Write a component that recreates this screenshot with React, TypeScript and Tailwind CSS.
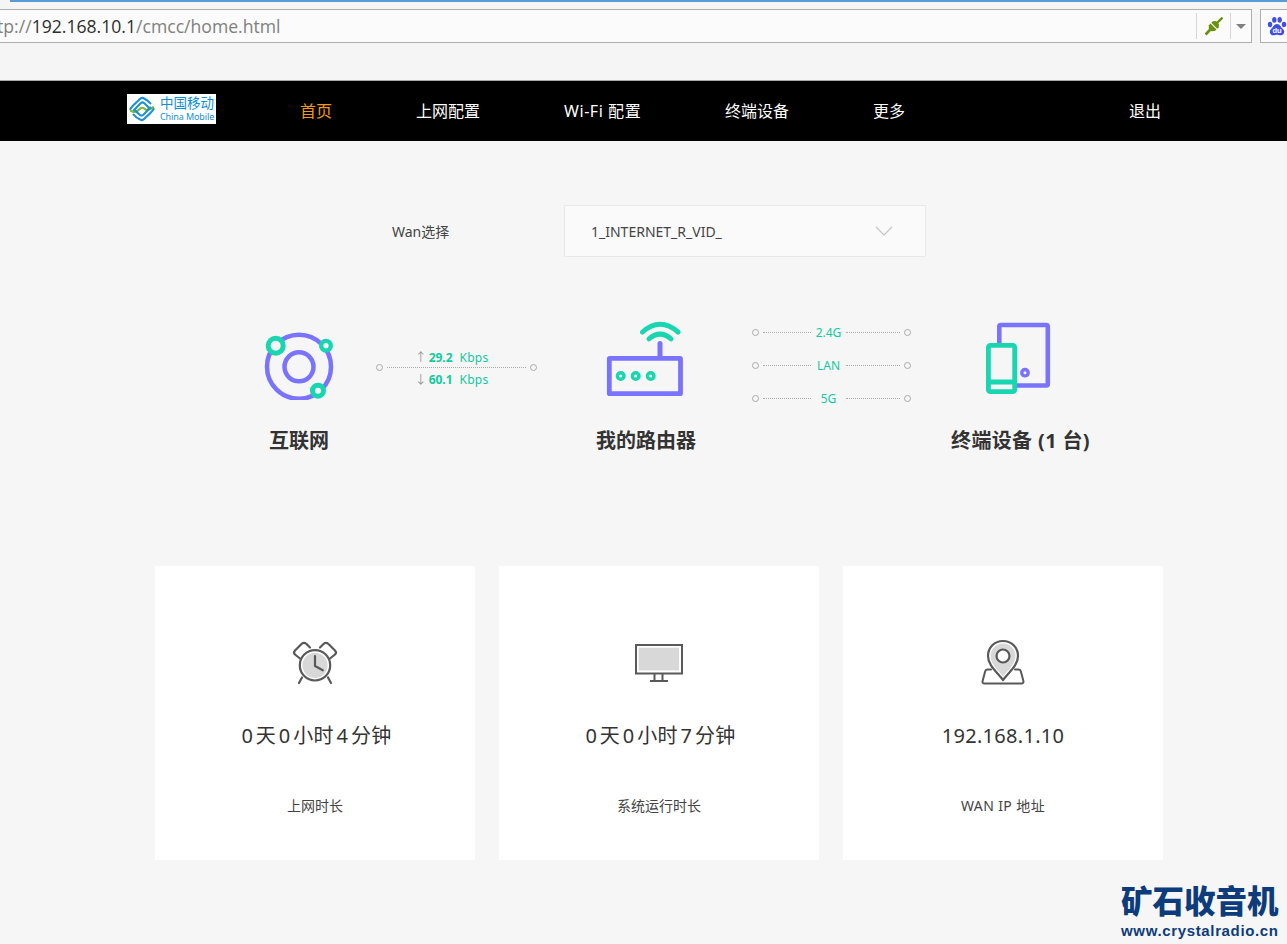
import React from "react";

const FONT = "font-['Noto_Sans','Noto_Sans_CJK_SC',sans-serif]";
const G = "#17d6b0";
const P = "#7a73ff";
const BG = "#f6f6f6";

function Plug() {
  return (
    <svg viewBox="0 0 20 20" className="w-5 h-5 block">
      <g fill="#6a900f" transform="rotate(-45 10 10)">
        <rect x="-2" y="8.6" width="7" height="2.8" rx="0.8" />
        <path d="M4.5 8 L7 5.8 H9.3 V14.2 H7 L4.5 12 Z" />
        <path d="M10.4 5.8 H12.5 L15 8 V12 L12.5 14.2 H10.4 Z" />
        <rect x="14.5" y="8.8" width="7.5" height="2.4" rx="0.8" />
      </g>
    </svg>
  );
}

function Paw() {
  return (
    <svg viewBox="0 0 20 20" className="w-5 h-5 block">
      <g fill="#3f4ee8">
        <ellipse cx="3" cy="8.5" rx="2.2" ry="2.8" />
        <ellipse cx="7.3" cy="3.8" rx="2.2" ry="2.9" />
        <ellipse cx="12.7" cy="3.8" rx="2.2" ry="2.9" />
        <ellipse cx="17" cy="8.5" rx="2.2" ry="2.8" />
        <path d="M10 8 C13 8 13.5 11 16 13 C18.5 15.5 17 19.5 13.5 19.3 C12 19.2 11 18.8 10 18.8 C9 18.8 8 19.2 6.5 19.3 C3 19.5 1.5 15.5 4 13 C6.5 11 7 8 10 8 Z" />
      </g>
      <text x="10" y="17.4" textAnchor="middle" fontSize="7.5" fontWeight="700" fill="#fff" fontFamily="Liberation Sans">du</text>
    </svg>
  );
}

function Logo() {
  return (
    <div className="w-[89px] h-[30px] -mt-[4px] bg-white flex items-center shrink-0 pl-px">
      <svg viewBox="0 0 30 30" className="w-[28px] h-[28px] block shrink-0">
        <g fill="none" strokeLinecap="round">
          <path d="M2.5 15 C5 11 9 8 12.5 4.5 Q15 2 17.5 4 Q21 5.5 24 9" stroke="#1d8fd6" strokeWidth="2.3" />
          <path d="M6 16.5 L13.5 8.8 Q15.5 7 17.5 8.8 L22 13 Q23 14.5 21.5 15.5" stroke="#1d8fd6" strokeWidth="2.3" />
          <path d="M3 17 Q8 20 12 15.5 Q15 12 18 15 Q21 18 27 13" stroke="#7dbb2e" strokeWidth="2.3" />
          <path d="M27.5 15 C25 19 21 22 17.5 25.5 Q15 28 12.5 26 Q9 24.5 6 21" stroke="#1d8fd6" strokeWidth="2.3" />
          <path d="M24 13.5 L16.5 21.2 Q14.5 23 12.5 21.2 L8 17" stroke="#1d8fd6" strokeWidth="2.3" />
        </g>
      </svg>
      <div className="ml-[4px] flex flex-col items-start text-[#0f8fd8]">
        <span className="text-[13.5px] leading-[15px]">中国移动</span>
        <span className="text-[9px] leading-[11px] tracking-[-0.1px] whitespace-nowrap">China Mobile</span>
      </div>
    </div>
  );
}

function Ring({ extra }: { extra?: string }) {
  return <span className={`w-[7px] h-[7px] rounded-full border border-[#aaaaaa] shrink-0 ${extra ?? ""}`} />;
}
function Dots({ w, extra }: { w: string; extra?: string }) {
  return <span className={`${w} border-t border-dotted border-[#aaaaaa] h-0 block shrink-0 ${extra ?? ""}`} />;
}

function Band({ label }: { label: string }) {
  return (
    <div className="h-[22px] flex items-center">
      <Ring />
      <Dots w="w-[48px]" extra="ml-[4px]" />
      <span className="w-[36px] text-center text-[12px] leading-[22px] pt-px text-[#13c9a0]">{label}</span>
      <Dots w="w-[54px]" />
      <Ring extra="ml-[4px]" />
    </div>
  );
}

function InternetIcon() {
  return (
    <svg viewBox="259 320 80 80" className="w-20 h-20 block mx-auto" fill="none">
      <circle cx="299" cy="366.8" r="32" stroke={P} strokeWidth="4.5" />
      <circle cx="299" cy="366.8" r="14.5" stroke={P} strokeWidth="4.5" />
      <circle cx="275.7" cy="345.7" r="7.5" fill={BG} stroke={G} strokeWidth="5" />
      <circle cx="326" cy="345.7" r="4.8" fill={BG} stroke={G} strokeWidth="4.4" />
      <circle cx="318" cy="390.7" r="5.5" fill={BG} stroke={G} strokeWidth="5" />
    </svg>
  );
}

function RouterIcon() {
  return (
    <svg viewBox="601 320 90 80" className="w-[90px] h-20 block mx-auto" fill="none">
      <path d="M660 343.5 V356" stroke={P} strokeWidth="5" strokeLinecap="round" />
      <path d="M642.5 332 Q660 316.5 678 332" stroke={G} strokeWidth="5" strokeLinecap="round" />
      <path d="M649 338.8 Q660 329.5 671 338.8" stroke={G} strokeWidth="5" strokeLinecap="round" />
      <rect x="609.3" y="358.3" width="71.2" height="35.4" rx="0.5" stroke={P} strokeWidth="4.8" strokeLinejoin="round" />
      {[620.7, 635.7, 650.7].map((x) => (
        <circle key={x} cx={x} cy="376" r="3.3" fill={BG} stroke={G} strokeWidth="3.4" />
      ))}
    </svg>
  );
}

function DeviceIcon() {
  return (
    <svg viewBox="982 320 77 80" className="w-[77px] h-20 block mx-auto" fill="none">
      <rect x="999.3" y="325" width="48.5" height="60.5" rx="1.5" stroke={P} strokeWidth="4.6" />
      <circle cx="1025" cy="372.7" r="3.2" fill={BG} stroke={P} strokeWidth="3.4" />
      <rect x="988.4" y="345.4" width="26.3" height="46.3" rx="2" fill={BG} stroke={G} strokeWidth="4.8" />
      <path d="M988 382 H1015" stroke={G} strokeWidth="5" />
    </svg>
  );
}

function ClockIcon() {
  return (
    <svg viewBox="0 0 70 60" className="w-[70px] h-[60px] block mx-auto" fill="none" stroke="#595959" strokeWidth="2.2" strokeLinecap="round" strokeLinejoin="round">
      <circle cx="35" cy="34.3" r="12.6" fill="#d8d8d8" stroke="none" />
      <circle cx="35" cy="34.3" r="15.2" />
      <path d="M35 25 V35 L42.8 39.3" />
      <path d="M20 27.5 L15 23.5 Q13 21.5 15 19.5 L21.5 13 Q24 10.8 26.5 13 L30 16.5" />
      <path d="M50 27.5 L55 23.5 Q57 21.5 55 19.5 L48.5 13 Q46 10.8 43.5 13 L40 16.5" />
      <path d="M22 46.5 L19 52" />
      <path d="M48 46.5 L51 52" />
    </svg>
  );
}

function MonitorIcon() {
  return (
    <svg viewBox="-1 0 70 60" className="w-[70px] h-[60px] block mx-auto" fill="none" stroke="#595959" strokeWidth="2">
      <rect x="13.7" y="16.7" width="40.3" height="22.7" fill="#d8d8d8" stroke="none" />
      <rect x="11" y="14" width="46" height="28.5" strokeWidth="2" />
      <path d="M29.5 43 V49.5 M37.5 43 V49.5 M25 50 H43" />
    </svg>
  );
}

function PinIcon() {
  return (
    <svg viewBox="-2 0 70 60" className="w-[70px] h-[60px] block mx-auto" fill="none" stroke="#595959" strokeWidth="2" strokeLinejoin="round" strokeLinecap="round">
      <path d="M21 38.5 H17.5 Q15.7 38.5 15.2 40.2 L12.6 50 Q12.2 52.5 14.5 52.5 H51.5 Q53.8 52.5 53.4 50 L50.8 40.2 Q50.3 38.5 48.5 38.5 H45" />
      <path d="M33 49 C27 41 18 34.5 18 25 C18 16.5 24.5 10 33 10 C41.5 10 48 16.5 48 25 C48 34.5 39 41 33 49 Z" fill="#fff" strokeWidth="2.2" />
      <path d="M33 45.5 C28 39 20.5 33 20.5 25 C20.5 18 26 12.5 33 12.5 C40 12.5 45.5 18 45.5 25 C45.5 33 38 39 33 45.5 Z" fill="#d8d8d8" stroke="none" />
      <circle cx="33" cy="25" r="6.5" fill="#fff" strokeWidth="2.2" />
    </svg>
  );
}

function Card({ icon, value, label, labelExtra }: { icon: React.ReactNode; value: React.ReactNode; label: string; labelExtra?: string }) {
  return (
    <div className="w-[320px] h-[294px] bg-white flex flex-col items-center pt-[65px]">
      {icon}
      <div className="mt-[30px] h-[30px] leading-[30px] text-[20px] tracking-[0.3px] text-[#333333] whitespace-nowrap flex">{value}</div>
      <div className={`mt-[45px] h-[20px] leading-[20px] text-[14px] text-[#444444] whitespace-nowrap ${labelExtra ?? ""}`}>{label}</div>
    </div>
  );
}

function Duration({ m }: { m: string }) {
  return (
    <span className="flex gap-[2.7px] pl-[3px]">
      <span>0</span><span>天</span><span>0</span><span>小时</span><span>{m}</span><span>分钟</span>
    </span>
  );
}

export default function App() {
  return (
    <div className={`relative w-[1287px] h-[944px] overflow-hidden bg-[#f6f6f6] ${FONT}`}>
      {/* browser chrome */}
      <div className="h-[81px] bg-[#f5f5f5] border-b border-[#aaaaaa]">
        <div className="ml-[10px] h-[2px] bg-[#5b9bd5]" />
        <div className="mt-[7px] h-[34px] flex">
          <div className="w-[1253px] h-full border border-l-0 border-[#aeaeae] bg-[#fbfbfb] flex items-center overflow-hidden">
            <div className="flex-1 min-w-0 overflow-hidden">
              <div className="-ml-[20px] text-[17.6px] leading-[32px] text-[#808080] whitespace-nowrap font-['Open_Sans',sans-serif]">
                http://<span className="text-[#2e2e2e]">192.168.10.1</span>/cmcc/home.html
              </div>
            </div>
            <div className="w-px h-[26px] bg-[#d5d5d5]" />
            <div className="w-[33px] flex justify-center"><Plug /></div>
            <div className="w-px h-[26px] bg-[#d5d5d5]" />
            <div className="w-[20px] flex justify-center">
              <span className="w-0 h-0 border-l-[5px] border-r-[5px] border-t-[5px] border-l-transparent border-r-transparent border-t-[#808080]" />
            </div>
          </div>
          <div className="ml-[8px] flex-1 h-full border border-r-0 border-[#aeaeae] bg-[#fbfbfb] flex items-center pl-[6px]">
            <Paw />
          </div>
        </div>
      </div>

      {/* nav */}
      <nav className="h-[60px] bg-black flex items-center pl-[127px] pr-[126px] text-[16px] text-white">
        <Logo />
        <div className="ml-[84px] flex items-center gap-[84px] whitespace-nowrap">
          <span className="text-[#f39a1e]">首页</span>
          <span>上网配置</span>
          <span className="w-[77px] tracking-[0.55px]">Wi-Fi 配置</span>
          <span>终端设备</span>
          <span>更多</span>
        </div>
        <span className="ml-auto">退出</span>
      </nav>

      {/* wan select */}
      <div className="mt-[64px] h-[52px] flex items-center pl-[392px]">
        <span className="w-[172px] text-[14px] text-[#444444]">Wan选择</span>
        <div className="w-[362px] h-[52px] border border-[#e8e8e8] bg-[#fafafa] rounded-[1px] flex items-center justify-between pl-[26px] pr-[32px]">
          <span className="text-[14px] text-[#444444]">1_INTERNET_R_VID_</span>
          <svg viewBox="0 0 18 10" className="w-[18px] h-[10px] block" fill="none" stroke="#c4c4c4" strokeWidth="1.2">
            <path d="M1 1 L9 9 L17 1" />
          </svg>
        </div>
      </div>

      {/* status */}
      <div className="mt-[63px] flex items-start pl-[259px]">
        <div className="w-20 shrink-0">
          <InternetIcon />
          <div className="mt-[27px] h-[28px] leading-[28px] text-[20px] font-bold text-[#333333] text-center">互联网</div>
        </div>
        <div className="ml-[37px] w-[161px] shrink-0 mt-[28px] flex flex-col">
          <div className="h-[19px] leading-[19px] text-[12px] text-[#13c9a0] flex items-center justify-center whitespace-nowrap pr-[10px]">
            <span className="text-[#999999] mr-[2px]">↑</span>
            <b className="font-bold mr-[7px]">29.2</b>
            <span className="tracking-[0.2px]">Kbps</span>
          </div>
          <div className="h-px flex items-center">
            <Ring />
            <Dots w="w-[139px]" extra="ml-[4px]" />
            <Ring extra="ml-[4px]" />
          </div>
          <div className="h-[22px] mt-px leading-[22px] text-[12px] text-[#13c9a0] flex items-center justify-center whitespace-nowrap pr-[10px]">
            <span className="text-[#999999] mr-[2px]">↓</span>
            <b className="font-bold mr-[7px]">60.1</b>
            <span className="tracking-[0.2px]">Kbps</span>
          </div>
        </div>
        <div className="ml-[59px] w-[100px] shrink-0">
          <div className="-mx-[10px]"><RouterIcon /></div>
          <div className="mt-[27px] h-[28px] leading-[28px] text-[20px] font-bold text-[#333333] text-center whitespace-nowrap">我的路由器</div>
        </div>
        <div className="ml-[56px] mt-px w-[159px] shrink-0 flex flex-col gap-[11px]">
          <Band label="2.4G" />
          <Band label="LAN" />
          <Band label="5G" />
        </div>
        <div className="ml-[40px] w-[139px] shrink-0">
          <DeviceIcon />
          <div className="mt-[27px] h-[28px] leading-[28px] text-[20px] font-bold tracking-[0.35px] text-[#333333] text-center whitespace-nowrap">终端设备 (1 台)</div>
        </div>
      </div>

      {/* cards */}
      <div className="mt-[111px] pl-[155px] flex gap-[24px]">
        <Card icon={<ClockIcon />} value={<Duration m="4" />} label="上网时长" />
        <Card icon={<MonitorIcon />} value={<Duration m="7" />} label="系统运行时长" />
        <Card icon={<PinIcon />} value="192.168.1.10" label="WAN IP 地址" labelExtra="tracking-[0.4px]" />
      </div>

      {/* watermark */}
      <div className="absolute left-[1121px] top-[882px] w-[160px] text-[#0c3c7c]">
        <div className="h-[38px] leading-[38px] text-[31.5px] font-black whitespace-nowrap">矿石收音机</div>
        <div className="mt-[1px] h-[20px] leading-[20px] text-[15px] font-bold tracking-[0.65px] whitespace-nowrap font-['Liberation_Sans',sans-serif]">www.crystalradio.cn</div>
      </div>
    </div>
  );
}
